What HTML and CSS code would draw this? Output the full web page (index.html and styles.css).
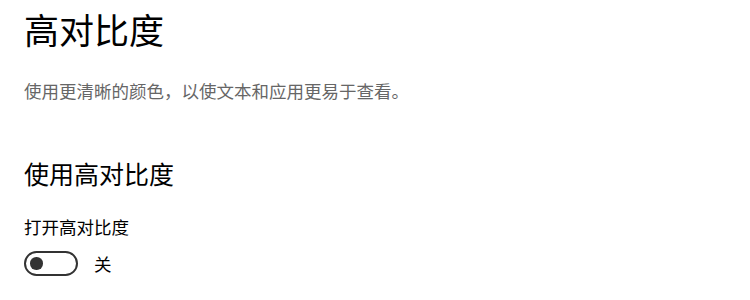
FILE: index.html
```html
<!DOCTYPE html>
<html lang="zh-CN">
<head>
<meta charset="utf-8">
<link rel="stylesheet" href="styles.css">
</head>
<body>
<main class="page">
  <h1 class="title">高对比度</h1>
  <p class="desc">使用更清晰的颜色，以使文本和应用更易于查看。</p>
  <h2 class="subtitle">使用高对比度</h2>
  <div class="setting">
    <div class="label">打开高对比度</div>
    <div class="toggle-row">
      <span class="toggle"><span class="knob"></span></span>
      <span class="state">关</span>
    </div>
  </div>
</main>
</body>
</html>
```
FILE: styles.css
```css
html, body {
  margin: 0;
  padding: 0;
  background: #ffffff;
}
body {
  font-family: "Noto Sans CJK SC", "Noto Sans", sans-serif;
  color: #000;
}
.page {
  padding: 8px 24px 0 24px;
}
.title {
  margin: 0;
  font-size: 35px;
  font-weight: 400;
  line-height: 42px;
}
.desc {
  margin: 29px 0 0 0;
  font-size: 17.5px;
  line-height: 24px;
  color: #666666;
}
.subtitle {
  margin: 54px 0 0 0;
  font-size: 25px;
  font-weight: 400;
  line-height: 32px;
}
.setting {
  margin-top: 26px;
}
.label {
  font-size: 17.5px;
  line-height: 24px;
}
.toggle-row {
  margin-top: 12px;
  display: flex;
  align-items: center;
  gap: 16px;
}
.toggle {
  box-sizing: border-box;
  width: 54px;
  height: 25px;
  border: 2.5px solid #333333;
  border-radius: 13px;
  display: flex;
  align-items: center;
  padding-left: 4px;
}
.knob {
  width: 12.5px;
  height: 12.5px;
  border-radius: 50%;
  background: #333333;
}
.state {
  font-size: 17.5px;
  line-height: 24px;
}
```
